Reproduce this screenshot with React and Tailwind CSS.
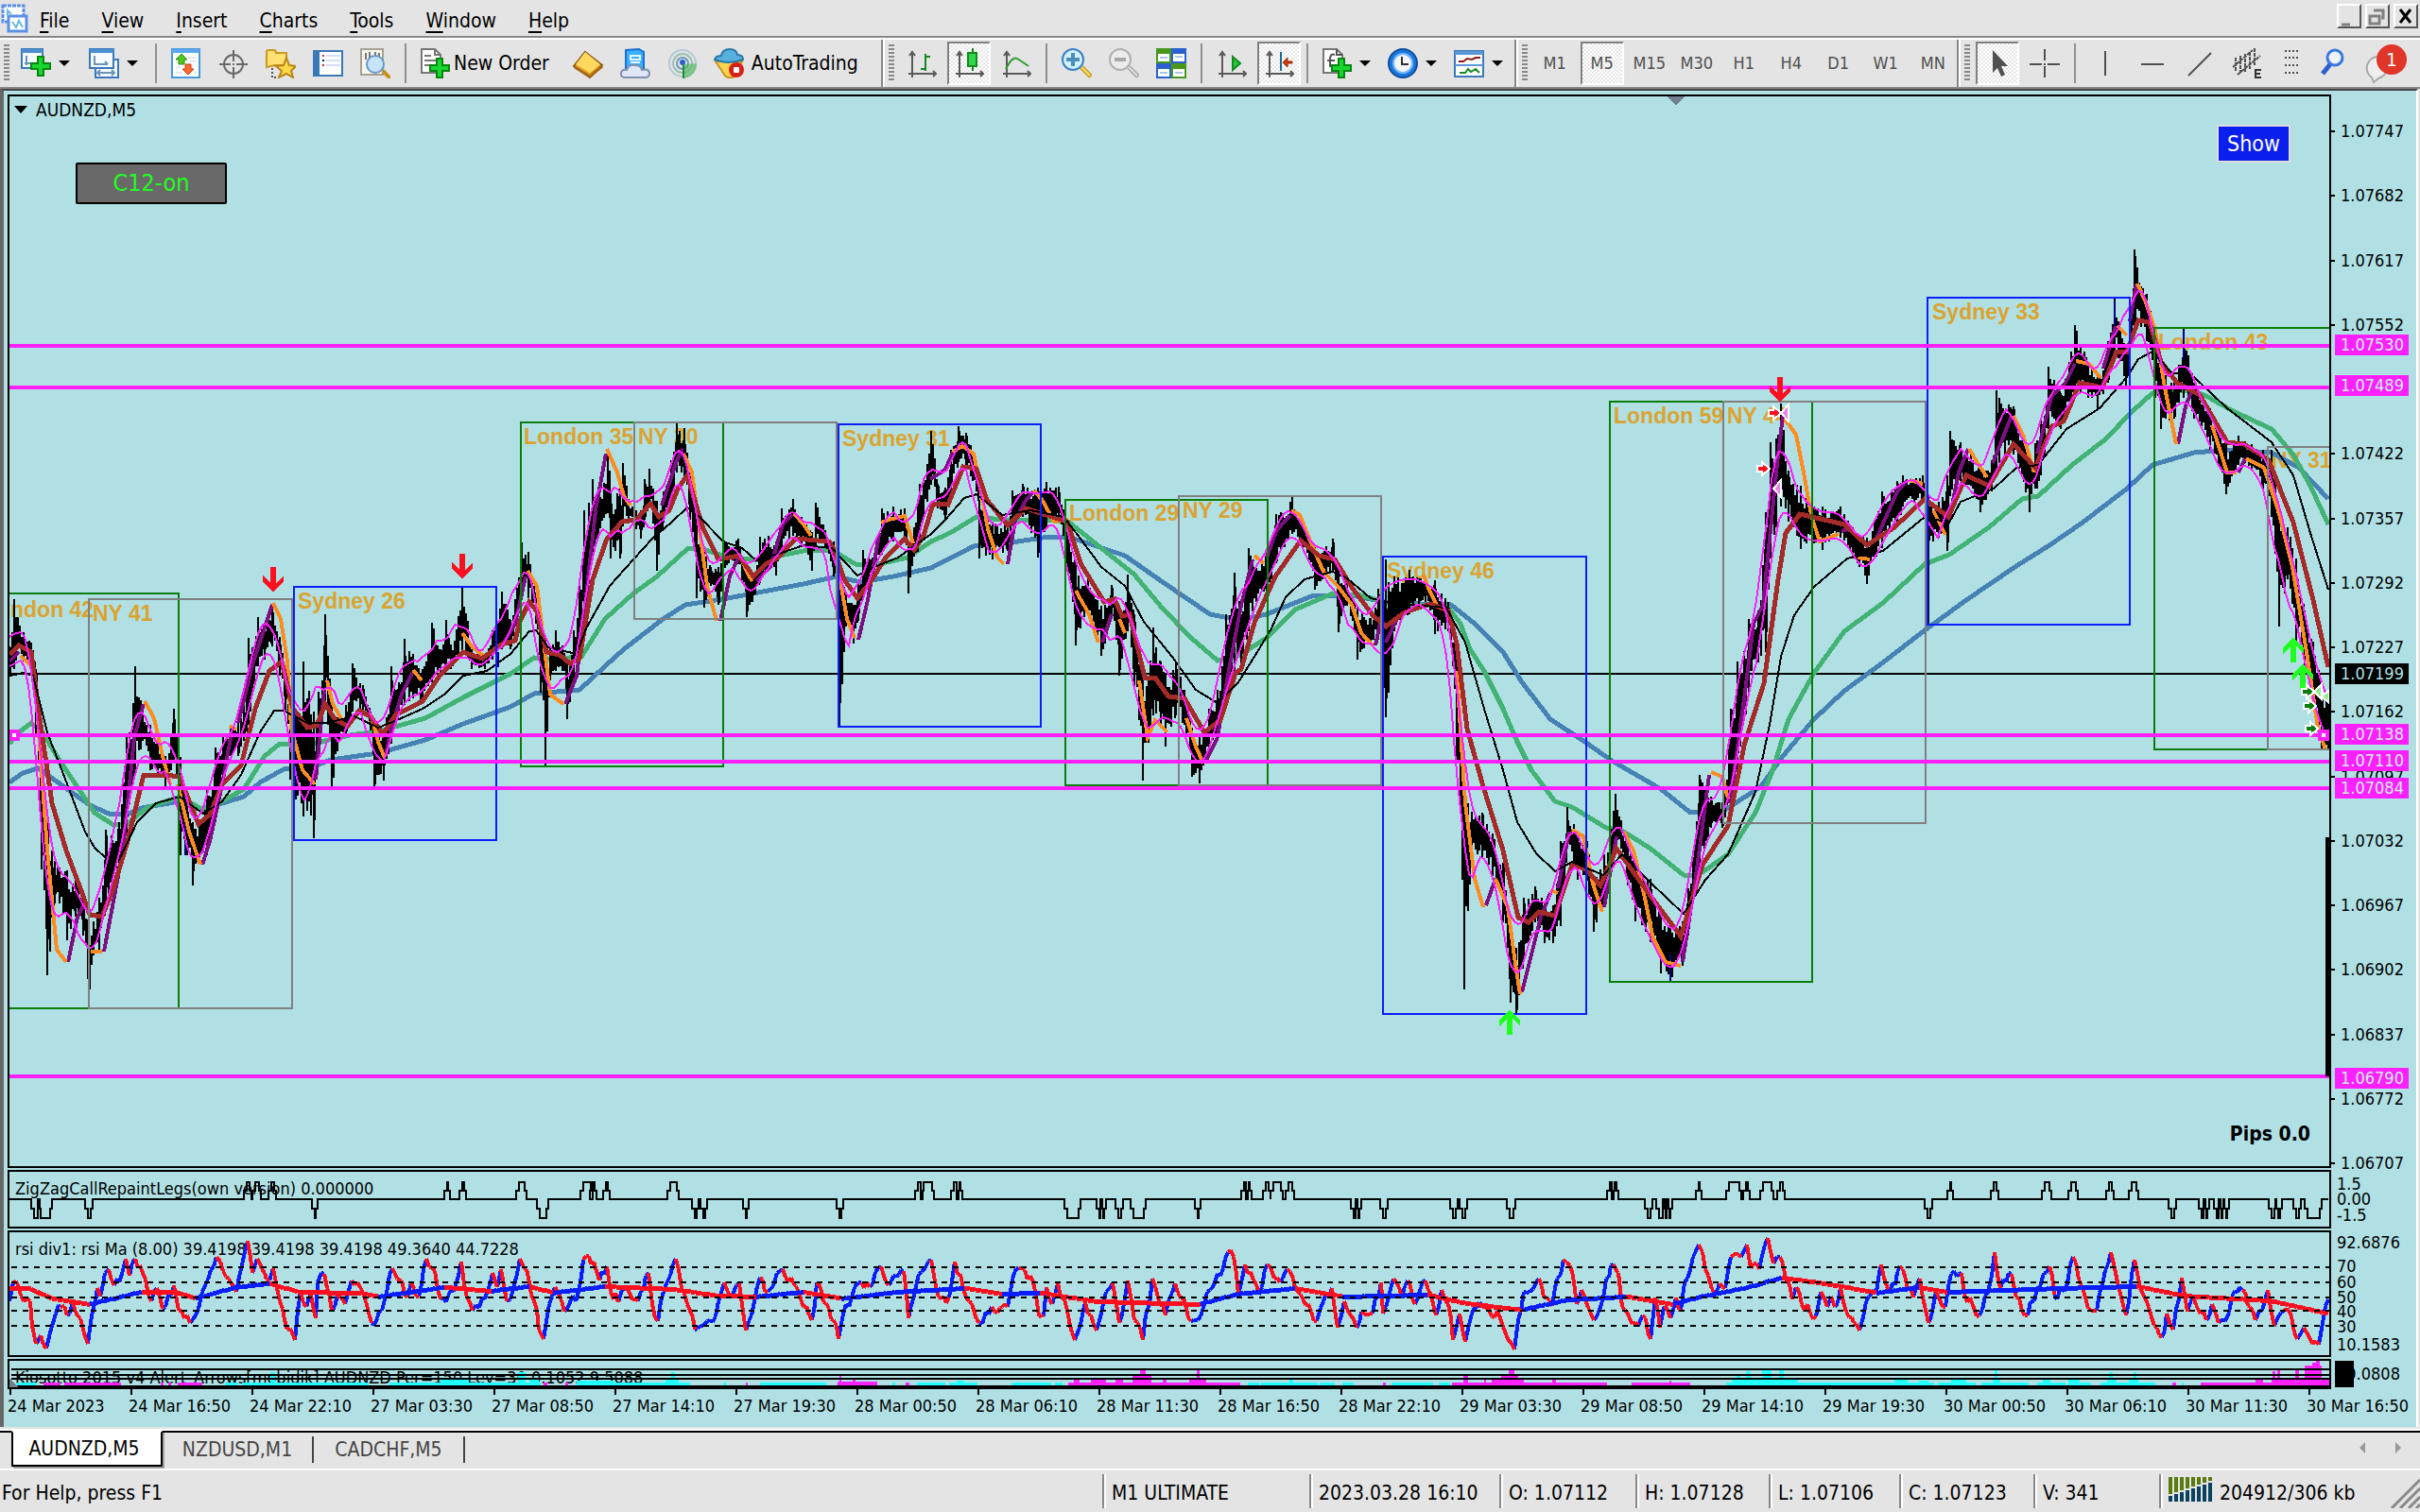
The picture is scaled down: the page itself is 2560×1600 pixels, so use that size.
import clsx from 'clsx';

// plot area shared by every pane, in chart units
const LEFT = 10;
const WIDTH = 2454;
const TOP = 102;
const HEIGHT = 1132;

// [x, high, low]
const PRICE = [
  [10, 684, 715], [15, 634, 708], [25, 670, 700], [33, 680, 702], [38, 708, 780], [44, 800, 920], [50, 870, 1032],
  [58, 911, 956], [63, 918, 956], [71, 921, 995], [80, 928, 970], [88, 949, 990], [94, 973, 1064], [99, 975, 1007],
  [105, 950, 1005], [112, 878, 960], [118, 884, 940], [126, 870, 920], [134, 780, 885], [143, 705, 820], [151, 752, 784],
  [159, 767, 815], [167, 785, 822], [175, 800, 835], [184, 750, 808], [191, 801, 905], [198, 853, 905], [204, 870, 937],
  [211, 870, 911], [219, 835, 905], [228, 791, 870], [236, 780, 818], [244, 767, 800], [252, 763, 800], [258, 746, 784],
  [263, 675, 767], [273, 653, 705], [280, 663, 698], [288, 639, 684], [296, 674, 715], [302, 708, 753], [307, 753, 825],
  [313, 753, 846], [321, 700, 864], [332, 753, 887], [337, 732, 787], [344, 650, 746], [351, 739, 836], [359, 756, 784],
  [366, 746, 780], [373, 702, 753], [384, 725, 753], [392, 753, 773], [396, 767, 836], [406, 773, 826], [414, 705, 787],
  [422, 722, 753], [428, 676, 746], [447, 708, 742], [457, 659, 722], [466, 687, 711], [472, 656, 708], [477, 684, 708],
  [489, 622, 694], [499, 687, 708], [513, 694, 708], [521, 667, 698], [531, 626, 687], [540, 656, 687], [552, 574, 633],
  [556, 587, 617], [559, 584, 633], [567, 627, 660], [572, 650, 733], [577, 700, 810], [582, 683, 720], [588, 667, 710],
  [595, 683, 710], [600, 700, 761], [607, 667, 720], [613, 617, 693], [618, 540, 653], [627, 507, 587], [633, 523, 570],
  [643, 483, 543], [646, 520, 591], [656, 517, 591], [659, 490, 557], [665, 530, 550], [673, 540, 560], [678, 540, 570],
  [682, 507, 550], [687, 496, 533], [695, 530, 604], [702, 520, 553], [710, 487, 533], [716, 448, 500], [724, 453, 510],
  [730, 500, 550], [737, 543, 633], [745, 580, 643], [752, 600, 620], [760, 600, 640], [767, 573, 600], [781, 570, 597],
  [790, 603, 653], [796, 607, 637], [804, 568, 617], [813, 567, 600], [821, 573, 609], [827, 538, 580], [839, 528, 567],
  [848, 547, 577], [859, 563, 604], [863, 532, 573], [873, 563, 580], [882, 573, 610], [888, 600, 768], [895, 627, 660],
  [903, 640, 681], [908, 617, 657], [913, 582, 633], [923, 590, 607], [933, 538, 587], [945, 536, 573], [957, 538, 567],
  [961, 580, 628], [973, 512, 573], [985, 456, 513], [992, 512, 538], [1000, 516, 550], [1006, 476, 520], [1014, 451, 489],
  [1022, 458, 498], [1033, 489, 520], [1036, 529, 591], [1050, 552, 592], [1066, 556, 583], [1071, 519, 556],
  [1082, 512, 547], [1098, 516, 590], [1107, 510, 560], [1120, 515, 552], [1129, 552, 601], [1138, 596, 683],
  [1151, 610, 650], [1165, 641, 694], [1176, 619, 654], [1184, 641, 715], [1193, 608, 668], [1200, 650, 730],
  [1209, 712, 826], [1220, 664, 757], [1228, 700, 766], [1233, 712, 790], [1244, 700, 757], [1255, 739, 779],
  [1261, 770, 822], [1269, 779, 829], [1279, 750, 793], [1288, 730, 779], [1297, 650, 739], [1306, 606, 712],
  [1313, 650, 704], [1321, 580, 668], [1329, 601, 637], [1340, 580, 628], [1350, 544, 596], [1367, 526, 565],
  [1379, 556, 579], [1391, 579, 624], [1410, 570, 605], [1416, 601, 669], [1425, 614, 641], [1436, 641, 698],
  [1450, 654, 681], [1458, 623, 677], [1466, 592, 759], [1475, 610, 668], [1491, 603, 650], [1508, 614, 637],
  [1518, 614, 671], [1532, 637, 668], [1541, 686, 804], [1549, 802, 1047], [1557, 864, 904], [1568, 860, 909],
  [1579, 882, 927], [1590, 913, 976], [1598, 976, 1061], [1604, 1003, 1074], [1612, 950, 1016], [1624, 938, 976],
  [1634, 954, 998], [1643, 958, 998], [1651, 890, 980], [1658, 854, 898], [1669, 882, 931], [1678, 887, 942],
  [1686, 926, 986], [1697, 904, 959], [1709, 840, 893], [1722, 893, 937], [1730, 909, 975], [1746, 930, 997],
  [1757, 964, 1030], [1767, 980, 1038], [1780, 975, 1022], [1786, 940, 990], [1798, 820, 926], [1810, 843, 876],
  [1822, 849, 876], [1831, 750, 854], [1838, 700, 821], [1850, 655, 734], [1860, 646, 701], [1868, 542, 690],
  [1873, 468, 591], [1884, 427, 536], [1892, 498, 552], [1905, 514, 581], [1919, 536, 575], [1928, 536, 582],
  [1947, 536, 569], [1960, 558, 591], [1975, 569, 618], [1991, 520, 580], [2007, 509, 558], [2013, 503, 536],
  [2034, 503, 531], [2040, 525, 580], [2051, 531, 569], [2060, 503, 583], [2063, 456, 525], [2074, 468, 509],
  [2095, 492, 542], [2107, 487, 520], [2112, 413, 498], [2130, 430, 481], [2147, 481, 542], [2159, 443, 503],
  [2167, 388, 454], [2180, 416, 454], [2195, 344, 421], [2209, 383, 421], [2219, 399, 432], [2230, 361, 405],
  [2237, 316, 372], [2249, 366, 410], [2258, 264, 344], [2271, 311, 361], [2280, 350, 421], [2286, 388, 454],
  [2300, 405, 443], [2310, 348, 421], [2321, 405, 443], [2338, 432, 476], [2355, 470, 523], [2368, 461, 492],
  [2382, 470, 498], [2394, 476, 519], [2403, 476, 547], [2411, 536, 663], [2420, 558, 613], [2429, 591, 679],
  [2438, 646, 706], [2447, 679, 745], [2456, 720, 794], [2463, 740, 794],
];

const SLOW_MA =
  '10,828 24,818 40,813 60,827 85,845 95,852 115,861 134,862 150,855 190,848 210,856 235,850 258,843 275,828 300,814 330,812 350,804 400,797 450,783 490,766 540,748 565,734 613,730 640,705 660,687 700,656 725,640 770,633 850,618 885,610 910,616 945,610 985,601 1030,578 1070,574 1110,568 1130,568 1190,588 1230,616 1280,650 1310,656 1340,650 1390,630 1430,630 1470,638 1535,640 1560,660 1590,690 1610,722 1640,761 1678,786 1705,805 1757,835 1787,859 1822,859 1863,832 1886,800 1919,761 1951,731 1992,701 2036,667 2080,635 2133,599 2168,577 2203,553 2250,517 2277,492 2321,479 2356,476 2403,479 2432,495 2463,528';
const MID_MA =
  '10,787 20,775 33,765 45,775 60,800 80,830 100,860 120,873 134,872 155,855 190,843 215,857 235,848 258,835 280,800 296,787 330,787 370,778 400,774 450,760 490,738 540,713 565,696 578,698 615,695 640,655 670,628 695,610 728,580 740,580 765,588 800,593 850,583 880,582 905,597 925,598 960,590 985,573 1005,564 1033,547 1060,550 1100,550 1130,552 1165,580 1200,608 1230,644 1260,675 1288,699 1310,694 1340,675 1370,645 1410,628 1440,630 1475,640 1530,640 1545,660 1555,687 1570,710 1590,750 1605,785 1620,815 1645,848 1663,854 1699,876 1716,879 1746,898 1781,926 1795,927 1828,904 1857,860 1875,816 1892,761 1919,712 1951,668 1992,638 2036,597 2062,587 2104,558 2139,528 2156,525 2192,492 2227,465 2256,435 2277,416 2315,413 2332,418 2362,435 2403,454 2426,481 2444,514 2463,555';
const THIN_MA =
  '10,715 25,712 35,715 50,775 75,840 90,880 100,897 112,908 125,912 145,870 165,850 190,843 215,861 235,848 255,820 275,775 290,752 300,752 325,765 345,765 375,758 400,770 420,762 447,750 470,735 490,715 515,710 540,692 560,668 567,667 580,685 610,692 620,665 645,620 670,592 690,570 710,553 727,537 740,547 765,573 785,580 800,593 830,584 850,577 880,580 907,609 925,600 950,590 985,565 1000,550 1020,527 1033,523 1060,545 1090,540 1125,547 1140,566 1165,600 1190,620 1210,658 1240,695 1265,730 1288,744 1310,722 1330,690 1345,665 1360,632 1380,613 1410,605 1425,612 1450,633 1470,638 1530,643 1550,680 1570,750 1590,815 1605,870 1625,903 1645,922 1663,912 1696,926 1716,904 1746,934 1781,967 1804,931 1828,904 1857,838 1872,767 1884,695 1898,651 1919,621 1954,591 1992,583 2036,547 2062,553 2074,531 2109,517 2133,495 2156,492 2186,454 2221,432 2250,399 2262,380 2277,372 2297,394 2321,399 2356,432 2403,468 2426,503 2444,564 2463,624';
const FAST_MA =
  '10,693 20,683 33,690 42,760 55,850 70,900 85,940 95,968 108,970 120,940 135,890 152,820 175,820 190,822 210,872 222,862 235,830 255,810 270,750 285,710 298,700 310,750 325,770 335,768 344,745 355,762 368,768 380,752 392,758 405,777 418,757 447,742 465,715 490,690 510,697 530,682 545,678 550,657 560,637 568,647 578,690 592,693 603,702 613,697 627,613 642,570 658,552 673,550 688,533 697,547 708,540 717,517 727,503 733,523 743,557 760,592 782,588 797,610 810,597 823,590 842,570 877,573 883,583 893,613 907,633 920,617 937,590 957,570 967,582 977,567 987,533 1003,534 1019,494 1033,496 1044,529 1066,556 1085,538 1107,545 1129,552 1143,596 1168,637 1179,634 1187,652 1195,650 1211,717 1222,717 1236,737 1253,739 1274,775 1291,762 1307,712 1313,708 1327,659 1349,610 1376,572 1395,588 1412,592 1431,623 1453,652 1466,663 1486,648 1513,639 1532,646 1541,681 1552,771 1568,829 1590,900 1606,971 1617,976 1628,965 1645,969 1663,915 1678,920 1693,937 1710,898 1746,948 1778,991 1801,915 1828,874 1845,789 1866,723 1881,613 1889,564 1904,544 1951,555 1975,577 2004,558 2036,528 2061,547 2080,503 2104,514 2130,470 2153,495 2171,451 2183,446 2200,405 2224,410 2239,372 2250,372 2262,339 2274,341 2286,383 2303,405 2327,418 2356,468 2374,470 2400,487 2426,553 2447,635 2463,706';

const HULL_DOWN = [
  '22,694 33,705', '40,760 50,900 60,1005 70,1018', '96,1007 108,1007', '153,742 163,760 172,800 180,830',
  '188,830 200,880 212,915', '243,768 250,772', '289,638 297,655 304,700 308,770 320,815 333,830', '346,720 352,745 362,762',
  '392,755 400,785 407,802', '437,709 446,720', '489,670 500,685 513,695', '558,604 568,620 574,670 582,735 596,745',
  '642,475 653,500 660,525 667,535', '723,480 732,500 740,560 748,620 758,657', '784,590 790,605 796,615', '840,543 850,555 858,567',
  '888,610 896,655 904,675', '932,553 940,550 957,546 966,575', '1008,478 1018,472 1030,480 1036,510 1045,560 1055,590 1062,597',
  '1094,519 1103,530 1115,552 1130,550', '1138,625 1152,650 1162,680', '1184,655 1190,670', '1205,720 1214,780 1222,762 1235,775',
  '1255,760 1265,790 1273,808', '1327,588 1337,596', '1366,540 1375,545 1385,570 1400,605 1415,620 1430,640 1440,670 1452,683',
  '1506,608 1512,625 1520,640', '1541,710 1550,850 1560,930 1569,960', '1582,930 1595,960 1603,1020 1608,1052', '1640,942 1648,945',
  '1663,878 1675,885 1685,935 1695,965', '1718,880 1728,900 1740,950 1748,990 1762,1018 1778,1022', '1810,817 1822,822 1828,845',
  '1888,443 1900,460 1908,500 1916,545 1925,573 1945,565', '1965,590 1978,592', '2020,508 2034,512', '2045,540 2058,566',
  '2083,475 2092,490 2102,505', '2130,440 2140,460 2152,500', '2196,382 2210,385 2222,400', '2240,345 2250,355',
  '2261,300 2270,320 2280,350 2290,410 2302,470', '2340,450 2356,500 2366,500', '2376,485 2395,495 2410,540 2425,600 2440,690 2452,770 2460,793',
];
const HULL_UP = [
  '10,700 20,690', '72,1018 82,970 90,955', '110,1007 130,900 142,780 152,745', '214,915 222,890 235,830 245,775',
  '252,765 268,700 288,640', '334,825 343,730', '408,800 414,770 425,735 436,712', '530,685 545,660 556,610',
  '598,745 610,715 618,650 630,540 641,480', '700,535 715,490 722,475', '762,657 772,610 781,590', '800,615 815,600 828,555 838,545',
  '908,677 918,635 930,565', '984,507 1000,497 1008,478', '1066,597 1074,550 1085,530 1093,520', '1166,680 1176,650',
  '1276,805 1288,780 1298,720 1313,640 1325,592', '1340,590 1350,562 1365,545', '1455,683 1462,650', '1466,680 1480,650',
  '1572,958 1582,930', '1610,1050 1620,1010 1630,970 1640,945', '1648,940 1660,880', '1697,960 1710,885', '1780,1018 1795,920 1808,820',
  '1830,850 1845,740 1855,660 1865,640 1880,490 1886,440', '1948,562 1955,560', '1985,570 2007,520 2018,508', '2062,550 2072,500 2082,475',
  '2108,490 2120,460 2128,440', '2155,480 2170,420 2185,405 2195,385', '2225,390 2238,345', '2253,340 2260,300', '2304,470 2312,430 2320,410',
  '2368,500 2375,485',
];

// [x, y, right, bottom]
const SESSIONS = [
  { label: 'ndon 42', box: [0, 628, 189, 1067], at: [11, 645], color: '#0a7d0a' },
  { label: 'NY 41', box: [94, 634, 309, 1067], at: [98, 649], color: '#808080' },
  { label: 'Sydney 26', box: [311, 621, 525, 889], at: [315, 636], color: '#0a1eff' },
  { label: 'London 35', box: [551, 447, 765, 811], at: [554, 462], color: '#0a7d0a' },
  { label: 'NY 30', box: [671, 447, 885, 655], at: [675, 462], color: '#808080' },
  { label: 'Sydney 31', box: [887, 449, 1101, 769], at: [891, 464], color: '#0a1eff' },
  { label: 'London 29', box: [1127, 529, 1341, 831], at: [1131, 543], color: '#0a7d0a' },
  { label: 'NY 29', box: [1247, 525, 1461, 831], at: [1251, 540], color: '#808080' },
  { label: 'Sydney 46', box: [1463, 589, 1678, 1073], at: [1467, 604], color: '#0a1eff' },
  { label: 'London 59', box: [1703, 425, 1917, 1039], at: [1707, 440], color: '#0a7d0a' },
  { label: 'NY 44', box: [1823, 425, 2037, 871], at: [1827, 440], color: '#808080' },
  { label: 'Sydney 33', box: [2039, 315, 2253, 661], at: [2044, 330], color: '#0a1eff' },
  { label: 'London 43', box: [2279, 347, 2480, 793], at: [2283, 362], color: '#0a7d0a' },
  { label: 'NY 31', box: [2399, 473, 2480, 793], at: [2403, 487], color: '#808080' },
];

const LEVELS = [366, 410, 778, 806, 834, 1139];

const AXIS = [
  ['1.07747', 141], ['1.07682', 209], ['1.07617', 277], ['1.07552', 345], ['1.07422', 481], ['1.07357', 549], ['1.07292', 617],
  ['1.07227', 685], ['1.07162', 753], ['1.07097', 821], ['1.07032', 889], ['1.06967', 957], ['1.06902', 1025], ['1.06837', 1093],
  ['1.06772', 1161], ['1.06707', 1229],
];
const TAGS = [
  ['1.07530', 366], ['1.07489', 409], ['1.07138', 777], ['1.07110', 805], ['1.07084', 833], ['1.06790', 1139],
];

const RSI = [
  [10, 1377], [14, 1357], [25, 1377], [32, 1377], [34, 1403], [38, 1422], [43, 1413], [49, 1427], [53, 1410], [59, 1390], [64, 1383],
  [71, 1392], [77, 1377], [82, 1392], [88, 1407], [93, 1422], [98, 1387], [103, 1363], [106, 1372], [111, 1347], [115, 1343],
  [121, 1360], [129, 1348], [133, 1332], [137, 1350], [143, 1332], [151, 1347], [160, 1377], [166, 1363], [172, 1385], [184, 1360],
  [189, 1387], [201, 1400], [207, 1392], [217, 1360], [229, 1330], [236, 1345], [250, 1367], [255, 1343], [262, 1313], [267, 1347],
  [272, 1332], [277, 1343], [285, 1355], [289, 1342], [296, 1377], [304, 1407], [312, 1418], [318, 1367], [324, 1383], [329, 1370],
  [334, 1395], [336, 1357], [343, 1348], [351, 1387], [357, 1370], [365, 1380], [372, 1355], [378, 1357], [387, 1377], [393, 1400],
  [404, 1387], [415, 1342], [420, 1353], [425, 1355], [431, 1373], [435, 1357], [443, 1372], [451, 1332], [460, 1345], [466, 1375],
  [480, 1367], [488, 1335], [494, 1373], [500, 1387], [513, 1375], [521, 1347], [526, 1362], [530, 1343], [536, 1377], [543, 1363],
  [550, 1332], [557, 1343], [565, 1377], [570, 1407], [575, 1417], [581, 1380], [587, 1362], [597, 1388], [612, 1367], [617, 1333],
  [628, 1335], [634, 1355], [642, 1340], [646, 1367], [654, 1378], [661, 1363], [675, 1377], [686, 1347], [690, 1380], [696, 1398],
  [702, 1367], [715, 1332], [721, 1363], [730, 1387], [735, 1407], [757, 1393], [766, 1357], [775, 1370], [782, 1358], [789, 1408],
  [798, 1377], [804, 1352], [812, 1367], [828, 1343], [845, 1367], [850, 1383], [859, 1397], [864, 1357], [871, 1378], [882, 1397],
  [887, 1417], [892, 1390], [901, 1373], [911, 1357], [920, 1362], [932, 1340], [940, 1360], [945, 1350], [956, 1345], [961, 1395],
  [972, 1348], [985, 1333], [993, 1373], [1004, 1373], [1010, 1335], [1025, 1377], [1036, 1400], [1049, 1383], [1066, 1383],
  [1071, 1353], [1078, 1343], [1093, 1357], [1099, 1393], [1104, 1393], [1107, 1362], [1113, 1380], [1119, 1358], [1129, 1387],
  [1137, 1418], [1148, 1378], [1160, 1408], [1167, 1380], [1177, 1358], [1184, 1400], [1193, 1355], [1200, 1397], [1209, 1418],
  [1219, 1353], [1233, 1392], [1243, 1358], [1252, 1373], [1260, 1398], [1270, 1393], [1277, 1367], [1291, 1350], [1299, 1325],
  [1305, 1330], [1310, 1370], [1317, 1338], [1332, 1370], [1341, 1338], [1354, 1357], [1362, 1343], [1373, 1367], [1384, 1380],
  [1393, 1398], [1400, 1377], [1409, 1363], [1415, 1405], [1422, 1377], [1435, 1405], [1440, 1388], [1452, 1390], [1461, 1357],
  [1463, 1390], [1474, 1353], [1483, 1373], [1489, 1355], [1497, 1380], [1508, 1355], [1519, 1392], [1525, 1365], [1532, 1380],
  [1537, 1418], [1544, 1390], [1550, 1420], [1557, 1390], [1568, 1382], [1587, 1395], [1595, 1417], [1602, 1428], [1606, 1397],
  [1612, 1367], [1628, 1353], [1633, 1373], [1642, 1382], [1647, 1353], [1654, 1333], [1664, 1350], [1668, 1380], [1673, 1365],
  [1686, 1397], [1694, 1380], [1699, 1353], [1707, 1338], [1712, 1347], [1716, 1383], [1733, 1403], [1738, 1392], [1746, 1417],
  [1751, 1373], [1756, 1405], [1761, 1382], [1767, 1395], [1773, 1373], [1778, 1387], [1782, 1357], [1791, 1330], [1797, 1317],
  [1804, 1343], [1814, 1370], [1819, 1358], [1825, 1363], [1831, 1330], [1842, 1330], [1848, 1317], [1852, 1342], [1861, 1343],
  [1870, 1310], [1876, 1337], [1883, 1330], [1889, 1353], [1896, 1375], [1900, 1362], [1906, 1380], [1921, 1393], [1926, 1367],
  [1933, 1383], [1937, 1372], [1941, 1383], [1947, 1363], [1953, 1388], [1967, 1408], [1974, 1377], [1985, 1367], [1990, 1338],
  [1999, 1368], [2010, 1340], [2024, 1373], [2031, 1353], [2040, 1400], [2048, 1367], [2058, 1383], [2064, 1348], [2075, 1347],
  [2078, 1370], [2094, 1392], [2103, 1367], [2110, 1325], [2116, 1363], [2128, 1348], [2133, 1373], [2145, 1392], [2155, 1363],
  [2168, 1340], [2173, 1370], [2184, 1367], [2193, 1330], [2202, 1360], [2209, 1385], [2218, 1387], [2224, 1360], [2233, 1325],
  [2240, 1357], [2249, 1392], [2258, 1333], [2264, 1363], [2270, 1375], [2279, 1403], [2287, 1415], [2292, 1390], [2299, 1407],
  [2308, 1352], [2314, 1388], [2320, 1372], [2334, 1397], [2340, 1380], [2347, 1400], [2354, 1398], [2361, 1372], [2372, 1365],
  [2386, 1397], [2393, 1387], [2399, 1365], [2406, 1403], [2416, 1387], [2424, 1393], [2430, 1417], [2437, 1405], [2443, 1415],
  [2453, 1423], [2457, 1400], [2463, 1375],
];

const RSI_MA = [
  [10, 1363], [30, 1363], [55, 1374], [95, 1380], [150, 1367], [185, 1367], [207, 1374], [250, 1362], [285, 1358], [315, 1367],
  [380, 1368], [400, 1372], [470, 1362], [520, 1366], [560, 1361], [585, 1368], [640, 1361], [710, 1364], [760, 1371], [800, 1372],
  [850, 1367], [890, 1374], [950, 1367], [1020, 1363], [1060, 1369], [1100, 1368], [1160, 1377], [1270, 1380], [1310, 1369],
  [1370, 1363], [1420, 1372], [1510, 1370], [1550, 1379], [1610, 1386], [1660, 1375], [1720, 1372], [1770, 1380], [1800, 1372],
  [1850, 1362], [1885, 1352], [1930, 1358], [1985, 1368], [2030, 1362], [2060, 1367], [2150, 1364], [2180, 1363], [2260, 1361],
  [2310, 1371], [2400, 1376], [2463, 1390],
];

// [start, end, direction] of every zigzag leg
const LEGS = [
  [36, 39, -1], [43, 52, -1], [93, 95, -1], [261, 263, 1], [270, 273, 1], [287, 289, 1], [333, 333, -1], [473, 473, 1], [489, 490, 1],
  [549, 554, 1], [571, 577, -1], [617, 624, 1], [627, 628, 1], [641, 642, 1], [709, 715, 1], [735, 736, -1], [744, 745, -1],
  [789, 789, -1], [888, 889, -1], [971, 973, 1], [977, 985, 1], [1009, 1011, 1], [1015, 1015, 1], [1129, 1140, -1], [1163, 1163, -1],
  [1167, 1167, -1], [1183, 1185, -1], [1199, 1209, -1], [1267, 1267, -1], [1316, 1317, 1], [1321, 1321, 1], [1339, 1341, 1],
  [1347, 1354, 1], [1363, 1366, 1], [1432, 1433, -1], [1437, 1437, -1], [1463, 1465, -1], [1537, 1539, -1], [1547, 1549, -1],
  [1597, 1600, -1], [1703, 1704, 1], [1708, 1709, 1], [1743, 1745, -1], [1755, 1758, -1], [1762, 1762, -1], [1766, 1766, -1],
  [1797, 1797, 1], [1829, 1839, 1], [1847, 1848, 1], [1865, 1873, 1], [1883, 1885, 1], [2039, 2041, -1], [2063, 2063, 1],
  [2109, 2111, 1], [2163, 2167, 1], [2191, 2195, 1], [2231, 2233, 1], [2255, 2259, 1], [2297, 2299, -1], [2329, 2330, -1],
  [2334, 2334, -1], [2345, 2346, -1], [2350, 2350, -1], [2355, 2355, -1], [2403, 2405, -1], [2410, 2411, -1], [2429, 2431, -1],
  [2441, 2453, -1],
];

// [x, width, height, color]
const C = '#20ffff';
const M = '#ff20ff';
const HISTOGRAM = [
  [18, 20, 3, C], [46, 18, 3, M], [68, 60, 3, M], [170, 3, 3, M], [178, 3, 3, M], [188, 26, 3, M], [238, 14, 3, C], [256, 134, 3, C],
  [286, 5, 14, C], [412, 160, 3, C], [466, 30, 6, C], [548, 8, 14, C], [560, 10, 6, C], [575, 4, 3, M], [598, 3, 3, M], [610, 40, 5, C],
  [640, 90, 3, C], [704, 14, 8, C], [710, 4, 14, C], [765, 3, 3, C], [789, 2, 3, M], [804, 70, 3, C], [886, 42, 4, M], [888, 2, 12, M],
  [902, 3, 6, M], [944, 3, 3, C], [958, 4, 3, M], [970, 30, 3, C], [1004, 30, 3, C], [1012, 8, 5, C], [1070, 42, 3, C], [1116, 8, 3, C],
  [1130, 182, 3, M], [1136, 6, 6, M], [1154, 16, 6, M], [1180, 8, 8, M], [1198, 20, 10, M], [1206, 6, 16, M], [1230, 4, 6, M],
  [1258, 18, 7, M], [1266, 3, 18, M], [1320, 12, 3, C], [1334, 60, 3, C], [1364, 4, 6, C], [1396, 16, 3, C], [1420, 12, 3, C],
  [1463, 3, 3, M], [1472, 44, 3, C], [1522, 12, 3, C], [1536, 164, 3, M], [1548, 5, 10, M], [1570, 2, 6, M], [1578, 34, 6, M],
  [1588, 18, 10, M], [1596, 6, 18, M], [1642, 4, 6, M], [1726, 62, 3, M], [1766, 2, 5, M], [1826, 130, 3, C], [1832, 70, 6, C],
  [1837, 4, 12, C], [1847, 5, 15, C], [1864, 10, 18, C], [1882, 5, 18, C], [1956, 90, 3, C], [2004, 14, 6, C], [2030, 10, 5, C],
  [2050, 40, 3, C], [2064, 16, 6, C], [2096, 50, 3, C], [2108, 8, 8, C], [2110, 3, 16, C], [2155, 30, 3, C], [2161, 8, 8, C],
  [2188, 12, 8, C], [2200, 12, 3, C], [2222, 58, 3, C], [2229, 10, 8, C], [2231, 4, 14, C], [2252, 10, 8, C], [2257, 3, 14, C],
  [2298, 4, 3, M], [2308, 2, 3, C], [2328, 76, 3, M], [2386, 8, 6, M], [2403, 61, 8, M], [2404, 3, 15, M], [2409, 3, 18, M],
  [2428, 4, 18, M], [2438, 18, 21, M], [2446, 8, 24, M], [2450, 4, 26, M],
];

const DATES = [
  '24 Mar 2023', '24 Mar 16:50', '24 Mar 22:10', '27 Mar 03:30', '27 Mar 08:50', '27 Mar 14:10', '27 Mar 19:30', '28 Mar 00:50',
  '28 Mar 06:10', '28 Mar 11:30', '28 Mar 16:50', '28 Mar 22:10', '29 Mar 03:30', '29 Mar 08:50', '29 Mar 14:10', '29 Mar 19:30',
  '30 Mar 00:50', '30 Mar 06:10', '30 Mar 11:30', '30 Mar 16:50',
];

function random(seed) {
  let s = seed;
  return () => {
    s = (s * 16807) % 2147483647;
    return s / 2147483647;
  };
}

function bandAt(x) {
  let i = 1;
  while (i < PRICE.length - 1 && PRICE[i][0] < x) i++;
  const a = PRICE[i - 1];
  const b = PRICE[i];
  const t = Math.min(1, Math.max(0, (x - a[0]) / (b[0] - a[0])));
  return [a[1] + (b[1] - a[1]) * t, a[2] + (b[2] - a[2]) * t];
}

function smoothBand(x) {
  let hi = 0;
  let lo = 0;
  for (let d = -10; d <= 10; d += 5) {
    const [h, l] = bandAt(x + d);
    hi += h / 5;
    lo += l / 5;
  }
  return [hi, lo];
}

function candles() {
  const next = random(77);
  let d = '';
  for (let x = LEFT; x < LEFT + WIDTH; x += 2) {
    const [hi, lo] = bandAt(x);
    const range = lo - hi;
    const top = hi + range * (0.04 + next() * 0.3);
    const bottom = lo - range * (0.04 + next() * 0.3);
    d += `M${x + 1} ${Math.round(top)}V${Math.round(bottom)}`;
  }
  PRICE.forEach(([x, hi, lo]) => {
    d += `M${x} ${hi}V${lo}`;
  });
  return d;
}

function channel(side) {
  const pts = [];
  for (let x = LEFT; x < LEFT + WIDTH; x += 4) {
    const [hi, lo] = smoothBand(x);
    const inset = (lo - hi) * 0.14;
    pts.push(`${x},${Math.round(side === 0 ? hi + inset : lo - inset)}`);
  }
  return pts.join(' ');
}

function zigzag() {
  let d = 'M10 1269';
  LEGS.forEach(([a, b, dir]) => {
    const y = dir > 0 ? 1251 : 1289;
    d += `H${a - 3}V${dir > 0 ? 1260 : 1279}H${a}V${y}H${b + 1}V${dir > 0 ? 1260 : 1279}H${b + 3}V1269`;
  });
  return d + 'H2463';
}

// splits a series into its rising and its falling strokes
function slopes(series, noise) {
  const next = random(31);
  let up = '';
  let down = '';
  for (let i = 1; i < series.length; i++) {
    const [x0, y0] = series[i - 1];
    const [x1, y1] = series[i];
    const steps = Math.max(1, Math.round((x1 - x0) / 3));
    let px = x0;
    let py = y0;
    for (let k = 1; k <= steps; k++) {
      const x = x0 + ((x1 - x0) * k) / steps;
      const y = y0 + ((y1 - y0) * k) / steps + (k < steps ? (next() - 0.5) * noise : 0);
      const stroke = `M${Math.round(px)} ${Math.round(py)}L${Math.round(x)} ${Math.round(y)}`;
      if (y1 < y0) up += stroke;
      else down += stroke;
      px = x;
      py = y;
    }
  }
  return { up, down };
}

const CANDLES = candles();
const UPPER = channel(0);
const LOWER = channel(1);
const ZIGZAG = zigzag();
const RSI_LINES = slopes(RSI, 12);
const RSI_MA_LINES = slopes(RSI_MA, 0);

const fromLeft = (x) => `${((x - LEFT) / WIDTH) * 100}%`;
const fromTop = (y) => `${((y - TOP) / HEIGHT) * 100}%`;

function Plot({ top, height, children }) {
  return (
    <svg
      className="absolute inset-0 h-full w-full"
      viewBox={`${LEFT} ${top} ${WIDTH} ${height}`}
      preserveAspectRatio="none"
      shapeRendering="crispEdges"
      fill="none"
      aria-hidden="true"
    >
      {children}
    </svg>
  );
}

function ArrowMark({ x, y, up }) {
  return up ? (
    <path d={`M${x} ${y}L${x + 11} ${y + 12}V${y + 18}L${x + 3} ${y + 10}V${y + 27}H${x - 3}V${y + 10}L${x - 11} ${y + 18}V${y + 12}Z`} fill="#20ff20" />
  ) : (
    <path d={`M${x} ${y + 27}L${x + 11} ${y + 15}V${y + 9}L${x + 3} ${y + 17}V${y}H${x - 3}V${y + 17}L${x - 11} ${y + 9}V${y + 15}Z`} fill="#ff1020" />
  );
}

function TradeMark({ x, y, color }) {
  return (
    <path d={`M${x - 6} ${y - 3}H${x - 1}V${y - 7}L${x + 7} ${y}L${x - 1} ${y + 7}V${y + 3}H${x - 6}Z`} fill={color} stroke="#fff" strokeWidth="2" />
  );
}

function PricePane() {
  return (
    <div className="flex min-h-0 flex-1">
      <div className="relative min-w-0 flex-1 border-2 border-black">
        <div className="absolute inset-0 overflow-hidden">
          {SESSIONS.map((s) => (
            <span
              key={s.label}
              className="absolute -translate-y-1/2 text-[23px] leading-7 font-bold whitespace-nowrap text-[#dba330] font-['Liberation_Sans',sans-serif]"
              style={{ left: fromLeft(s.at[0]), top: fromTop(s.at[1]) }}
            >
              {s.label}
            </span>
          ))}
        </div>
        <Plot top={TOP} height={HEIGHT}>
          <path d="M10 713H2464" stroke="#000" strokeWidth="2" />
          <polyline points={SLOW_MA} stroke="#4682b4" strokeWidth="5" />
          <polyline points={MID_MA} stroke="#42b375" strokeWidth="5" />
          <path d={CANDLES} stroke="#000" strokeWidth="2" />
          <path d="M888 600V768M2040 525V660" stroke="#000" strokeWidth="2" />
          <path d="M527 690V706M196 870V905M2310 350V380M1767 1010V1038M2237 318V350" stroke="#000080" strokeWidth="2" />
          {HULL_UP.map((p) => (
            <polyline key={p} points={p} stroke="#7d1080" strokeWidth="4" />
          ))}
          {HULL_DOWN.map((p) => (
            <polyline key={p} points={p} stroke="#ff8c20" strokeWidth="4" />
          ))}
          <polyline points={FAST_MA} stroke="#a52a2a" strokeWidth="5" />
          <polyline points={THIN_MA} stroke="#000" strokeWidth="2" />
          <polyline points={UPPER} stroke="#ff20ff" strokeWidth="2" />
          <polyline points={LOWER} stroke="#ff20ff" strokeWidth="2" />
          {SESSIONS.map(({ label, box, color }) => (
            <rect key={label} x={box[0]} y={box[1]} width={box[2] - box[0]} height={box[3] - box[1]} stroke={color} strokeWidth="2" />
          ))}
          {LEVELS.map((y) => (
            <path key={y} d={`M10 ${y}H2464`} stroke="#ff20ff" strokeWidth="4" />
          ))}
          <path d="M11 774H19V782H11ZM2454 774H2462V782H2454Z" fill="#fff" stroke="#ff20ff" strokeWidth="4" />
          <ArrowMark x={289} y={600} />
          <ArrowMark x={489} y={586} />
          <ArrowMark x={1883} y={399} />
          <ArrowMark x={1597} y={1068} up />
          <ArrowMark x={2426} y={674} up />
          <ArrowMark x={2436} y={702} up />
          <path d="M1892 428V446L1884 437ZM1884 508V526L1876 517Z" fill="#ee82ee" stroke="#fff" strokeWidth="2" />
          <path d="M2456 724V740L2448 732ZM2464 730V744L2456 737Z" fill="#90ee90" stroke="#fff" strokeWidth="2" />
          <TradeMark x={1877} y={437} color="#ff1020" />
          <TradeMark x={1865} y={496} color="#ff1020" />
          <TradeMark x={2441} y={732} color="#0a7d0a" />
          <TradeMark x={2443} y={747} color="#0a7d0a" />
          <TradeMark x={2445} y={771} color="#0a7d0a" />
          <path d="M1764 102H1782L1773 112Z" fill="#708090" />
          <path d="M2462 886V1139" stroke="#000" strokeWidth="4" />
        </Plot>
        <h1 className="absolute top-0.5 left-1 flex items-center gap-2 text-[19px] leading-6">
          <svg className="h-2 w-4" viewBox="0 0 16 8" aria-hidden="true">
            <path d="M1 0H15L8 8Z" />
          </svg>
          AUDNZD,M5
        </h1>
        <button className="absolute top-[70px] left-[70px] h-11 w-[160px] rounded-xs border-2 border-black bg-[#696969] text-[25px] leading-8 text-[#20ff20]">
          C12-on
        </button>
        <button className="absolute top-[30px] right-[41px] h-10 w-[78px] border-2 border-[#dcdcdc] bg-[#0a1eee] text-[23px] leading-8 text-white">
          Show
        </button>
        <p className="absolute right-5 bottom-5 text-[21px] leading-7 font-bold">Pips 0.0</p>
      </div>
      <div className="relative w-[90px]">
        {AXIS.map(([label, y]) => (
          <div key={label} className="absolute left-0 flex -translate-y-1/2 items-center gap-1.5 text-lg leading-5" style={{ top: fromTop(y) }}>
            <i className="h-0.5 w-1 bg-black" />
            {label}
          </div>
        ))}
        {TAGS.map(([label, y]) => (
          <div key={label} className="absolute left-1 w-[78px] -translate-y-1/2 bg-[#ff20ff] pl-1.5 text-lg leading-[22px] text-[#c8ecf0]" style={{ top: fromTop(y) }}>
            {label}
          </div>
        ))}
        <div className="absolute left-1 w-[78px] -translate-y-1/2 bg-black pl-1.5 text-lg leading-[22px] text-[#b0e0e4]" style={{ top: fromTop(713) }}>
          1.07199
        </div>
      </div>
    </div>
  );
}

function SubPane({ className, title, top, height, labels, axis, children }) {
  return (
    <section className={clsx('flex', className)}>
      <div className="relative min-w-0 flex-1 overflow-hidden border-2 border-black">
        <h2 className="absolute top-1.5 left-1.5 text-lg leading-6 whitespace-nowrap">{title}</h2>
        <Plot top={top} height={height}>
          {children}
        </Plot>
      </div>
      <div className="relative w-[90px]">
        {axis}
        {labels.map(([label, y]) => (
          <span key={label} className="absolute left-1.5 -translate-y-1/2 text-lg leading-5" style={{ top: `${((y - top) / height) * 100}%` }}>
            {label}
          </span>
        ))}
      </div>
    </section>
  );
}

function Chart() {
  return (
    <main className="mr-0.5 flex min-h-0 flex-1 flex-col border-t-2 border-r-2 border-l-4 border-t-[#444] border-r-white border-l-[#666] bg-[#b0e0e4] pl-1">
      <div className="flex min-h-0 flex-1 flex-col gap-0.5 pt-1">
        <PricePane />
        <SubPane
          className="h-[62px]"
          title="ZigZagCallRepaintLegs(own version) 0.000000"
          top={1240}
          height={58}
          labels={[['1.5', 1254], ['0.00', 1269], ['-1.5', 1285]]}
        >
          <path d={ZIGZAG} stroke="#000" strokeWidth="2" />
        </SubPane>
        <SubPane
          className="h-[134px]"
          title="rsi div1: rsi Ma (8.00) 39.4198 39.4198 39.4198 49.3640 44.7228"
          top={1304}
          height={130}
          labels={[['92.6876', 1317], ['70', 1341], ['60', 1357], ['50', 1373], ['40', 1387], ['30', 1403], ['10.1583', 1421]]}
        >
          <path d={RSI_LINES.up} stroke="#0a1eff" strokeWidth="4" />
          <path d={RSI_LINES.down} stroke="#ff1020" strokeWidth="4" />
          <path d={RSI_MA_LINES.down} stroke="#ff1020" strokeWidth="5" />
          <path d={RSI_MA_LINES.up} stroke="#0a1eff" strokeWidth="5" />
          <path d="M12 1341H2464M12 1357H2464M12 1373H2464M12 1387H2464M12 1403H2464" stroke="#000" strokeWidth="2" strokeDasharray="6 6" />
        </SubPane>
        <SubPane
          className="h-[32px]"
          title="Kiosotto 2015 v4 Alert_Arrows[mobidik] AUDNZD Per=150 Lev=30 0.1052 9.5088"
          top={1440}
          height={28}
          labels={[['10.0808', 1454]]}
          axis={<i className="absolute top-0.5 left-1 h-7 w-5 bg-black" />}
        >
          {HISTOGRAM.map(([x, w, h, color]) => (
            <rect key={`${x}-${w}`} x={x} y={1466 - h} width={w} height={h} fill={color} />
          ))}
          <path d="M12 1449H2464M12 1455H2464M12 1459H2464M10 1467H2464" stroke="#000" strokeWidth="2" />
          <path d="M10 1459L20 1468H10Z" fill="#708090" />
        </SubPane>
      </div>
      <ol className="flex h-10 pl-0.5">
        {DATES.map((date) => (
          <li key={date} className="w-32 shrink-0 text-lg leading-5 whitespace-nowrap">
            <i className="block h-1.5 w-0.5 bg-black" />
            <span className="-ml-0.5 block pt-0.5">{date}</span>
          </li>
        ))}
      </ol>
    </main>
  );
}

/* ---- toolbar icons, 32x32 ---- */

function Icon({ children }) {
  return (
    <svg className="h-8 w-8 shrink-0" viewBox="0 0 32 32" fill="none" aria-hidden="true">
      {children}
    </svg>
  );
}

const Plus = ({ x = 18, y = 18 }) => (
  <path d={`M${x - 3} ${y - 10}H${x + 3}V${y - 3}H${x + 10}V${y + 3}H${x + 3}V${y + 10}H${x - 3}V${y + 3}H${x - 10}V${y - 3}H${x - 3}Z`} fill="#18d830" stroke="#07850f" strokeWidth="2" />
);
const Axes = () => <path d="M6 5V31M2 27H31M3 8L6 4L9 8M28 24L31 27L28 30" stroke="#5a5a5a" strokeWidth="2" />;

const NewChartIcon = () => (
  <Icon>
    <rect x="1" y="1" width="22" height="20" fill="#f6fbff" stroke="#3a78b8" strokeWidth="2" />
    <path d="M1 3H23" stroke="#4a90d0" strokeWidth="4" />
    <path d="M6 8V18M4 16H12" stroke="#6c94b8" strokeWidth="2" />
    <Plus x={21} y={19} />
  </Icon>
);
const ProfilesIcon = () => (
  <Icon>
    <rect x="7" y="12" width="24" height="19" fill="#f6fbff" stroke="#3a78b8" strokeWidth="2" />
    <rect x="1" y="1" width="25" height="20" fill="#f6fbff" stroke="#3a78b8" strokeWidth="2" />
    <path d="M1 3H26" stroke="#4a90d0" strokeWidth="4" />
    <path d="M6 8V17H20M17 14L20 17M10 26H26M12 23L9 26L12 29M24 23L27 26L24 29" stroke="#6c94b8" strokeWidth="2" />
  </Icon>
);
const MarketWatchIcon = () => (
  <Icon>
    <rect x="1" y="1" width="29" height="30" fill="#fff" stroke="#4a98dc" strokeWidth="2" />
    <path d="M1 3H30" stroke="#5aa8ec" strokeWidth="4" />
    <path d="M5 10H9M5 15H7M18 10H27M20 14H27M5 20H10M5 26H12M24 26H27" stroke="#d0d0d0" strokeWidth="1" />
    <path d="M11 6L17 12H14V17H8V12H5Z" fill="#4cc820" stroke="#2a8a10" />
    <path d="M18 28L12 22H15V17H21V22H24Z" fill="#ff6a30" stroke="#c03a10" />
  </Icon>
);
const DataWindowIcon = () => (
  <Icon>
    <circle cx="16" cy="17" r="10" stroke="#6a6a6a" strokeWidth="2" />
    <path d="M16 2V14M16 20V32M1 17H13M19 17H31M16 16V18" stroke="#6a6a6a" strokeWidth="2" />
  </Icon>
);
const NavigatorIcon = () => (
  <Icon>
    <path d="M1 20V4Q1 2 3 2H9Q11 2 11 5H22V18H10Z" fill="#ffe070" stroke="#c89a20" strokeWidth="2" />
    <path d="M7 21V31H12" stroke="#555" strokeWidth="2" strokeDasharray="2 2" />
    <path d="M22 10L25 18L32 19L27 24L29 31L22 27L14 31L17 24L11 19L19 18Z" fill="#ffd84a" stroke="#b8861a" strokeWidth="2" />
  </Icon>
);
const TerminalIcon = () => (
  <Icon>
    <rect x="1" y="3" width="30" height="26" fill="#fff" stroke="#3a78b8" strokeWidth="2" />
    <path d="M4 3V29" stroke="#3a78b8" strokeWidth="6" />
    <path d="M14 8H29M14 13H29M14 18H29" stroke="#a8c0ff" strokeWidth="1" />
    <path d="M10 8H12M10 18H12" stroke="#f22" strokeWidth="2" />
    <path d="M10 13H12" stroke="#222" strokeWidth="2" />
  </Icon>
);
const TesterIcon = () => (
  <Icon>
    <rect x="1" y="1" width="23" height="27" fill="#f6f6f0" stroke="#a8a090" strokeWidth="2" />
    <path d="M6 5V12M10 4V10M16 4V10M20 5V12" stroke="#777" strokeWidth="2" />
    <path d="M24 24L32 32" stroke="#c8901a" strokeWidth="4" />
    <circle cx="16" cy="17" r="9" fill="#c8e4fa" stroke="#6a98c8" strokeWidth="2" />
  </Icon>
);
const OrderIcon = () => (
  <Icon>
    <path d="M2 1H16L22 7V26H2Z" fill="#fff" stroke="#777" strokeWidth="2" />
    <path d="M16 1V7H22M5 8H12M5 13H18M5 18H12" stroke="#777" strokeWidth="2" />
    <Plus x={21} y={21} />
  </Icon>
);
const EditorIcon = () => (
  <Icon>
    <path d="M13 4L31 18L18 31L1 19Z" fill="#e8a820" stroke="#8a5410" strokeWidth="2" />
    <path d="M13 4L29 17L18 26L3 17Z" fill="#ffd860" />
    <path d="M2 20L18 30L31 19" stroke="#a86818" strokeWidth="3" />
  </Icon>
);
const VpsIcon = () => (
  <Icon>
    <path d="M6 2L20 1L25 4V22H6Z" fill="#3ab0ff" stroke="#1a70d0" strokeWidth="2" />
    <path d="M11 8H21V12H11ZM11 15H21" stroke="#e8f6ff" strokeWidth="2" />
    <path d="M6 31Q0 31 1 26Q2 22 7 23Q9 17 16 18Q22 18 23 23Q31 21 31 27Q31 31 26 31Z" fill="#dfe6f6" stroke="#8090b0" strokeWidth="2" />
  </Icon>
);
const SignalsIcon = () => (
  <Icon>
    <circle cx="16" cy="16" r="14" stroke="#b4c8d8" strokeWidth="2" />
    <circle cx="16" cy="16" r="10" stroke="#9cc0b0" strokeWidth="2" />
    <circle cx="16" cy="16" r="6" stroke="#6a98c0" strokeWidth="2" />
    <path d="M17 17L31 16A15 15 0 0 1 17 32Z" fill="#4cb85a" opacity=".6" />
    <path d="M17 16V32" stroke="#1a9030" strokeWidth="2" />
    <circle cx="16" cy="15" r="3" fill="#2a60c8" />
  </Icon>
);
const ExpertIcon = () => (
  <Icon>
    <path d="M2 14H30L22 30Q16 33 12 29Z" fill="#ffd450" stroke="#c8961a" strokeWidth="2" />
    <path d="M1 12Q2 8 8 8Q9 1 17 1Q24 1 25 7Q31 7 31 12Q16 18 1 12Z" fill="#58b0dc" stroke="#2a78a8" strokeWidth="2" />
    <circle cx="24" cy="23" r="8" fill="#d82018" />
    <rect x="21" y="20" width="6" height="6" rx="1" fill="#fff" />
  </Icon>
);
const BarsIcon = () => (
  <Icon>
    <Axes />
    <path d="M20 6V24M20 9H25M15 22H20" stroke="#128a20" strokeWidth="2" />
  </Icon>
);
const CandleIcon = () => (
  <Icon>
    <Axes />
    <path d="M20 0V24" stroke="#128a20" strokeWidth="2" />
    <rect x="15" y="5" width="9" height="14" fill="#30d848" stroke="#128a20" strokeWidth="2" />
  </Icon>
);
const LineIcon = () => (
  <Icon>
    <Axes />
    <path d="M5 22Q12 8 17 11T29 19" stroke="#2a9a30" strokeWidth="2" />
  </Icon>
);
const ZoomIcon = ({ plus }) => (
  <Icon>
    <path d="M21 20L31 30" stroke={plus ? '#c8961a' : '#a8a8a8'} strokeWidth="5" />
    <path d="M21 20L30 29" stroke={plus ? '#ffe070' : '#e0e0e0'} strokeWidth="2" />
    <circle cx="12" cy="12" r="11" fill={plus ? '#d4f0fc' : '#ececec'} stroke={plus ? '#3a80c8' : '#b0b0b0'} strokeWidth="2" />
    <path d={plus ? 'M12 5V19M5 12H19' : 'M6 12H18'} stroke={plus ? '#4a90b8' : '#a8a8a8'} strokeWidth="4" />
  </Icon>
);
const TileIcon = () => (
  <Icon>
    <path d="M0 0H16V16H0ZM16 16H32V32H16Z" fill="#48981c" />
    <path d="M16 0H32V16H16ZM0 16H16V32H0Z" fill="#2a60d0" />
    <path d="M2 6H14V14H2ZM18 6H30V14H18ZM2 22H14V30H2ZM18 22H30V30H18Z" fill="#fff" />
    <path d="M4 10H12M20 9H28M4 26H12M20 26H28" stroke="#a8c8e8" strokeWidth="2" />
  </Icon>
);
const AutoScrollIcon = () => (
  <Icon>
    <Axes />
    <path d="M17 9L25 16L17 23Z" fill="#28c838" stroke="#128a20" strokeWidth="2" />
  </Icon>
);
const ShiftIcon = () => (
  <Icon>
    <Axes />
    <path d="M18 4V24" stroke="#1a6a98" strokeWidth="2" />
    <path d="M20 15L25 10V14H30V16H25V20Z" fill="#d83a08" stroke="#8a2a08" />
  </Icon>
);
const IndicatorsIcon = () => (
  <Icon>
    <path d="M2 1H16L22 7V26H2Z" fill="#fff" stroke="#777" strokeWidth="2" />
    <path d="M16 1V7H22M14 7Q9 5 9 12V20M6 13H14" stroke="#555" strokeWidth="2" />
    <Plus x={21} y={21} />
  </Icon>
);
const ClockIcon = () => (
  <Icon>
    <circle cx="16" cy="16" r="15" fill="#1a78e0" stroke="#104e9c" strokeWidth="2" />
    <circle cx="16" cy="16" r="10" fill="#f4f6f8" stroke="#7ab8f8" strokeWidth="2" />
    <path d="M15 9V17H22" stroke="#333" strokeWidth="2" />
  </Icon>
);
const TemplateIcon = () => (
  <Icon>
    <rect x="1" y="3" width="30" height="27" fill="#fff" stroke="#3a78b8" strokeWidth="2" />
    <path d="M1 5H31" stroke="#5a98d8" strokeWidth="4" />
    <path d="M1 18H31" stroke="#5a98d8" strokeWidth="2" />
    <path d="M5 14L10 14L14 11L19 12L23 10L28 10" stroke="#8a1a08" strokeWidth="2" />
    <path d="M6 26L12 26L15 22L18 25L23 22L27 26" stroke="#188a20" strokeWidth="2" />
  </Icon>
);
const CursorIcon = () => (
  <Icon>
    <path d="M11 2V26L16 21L20 30L24 28L20 19H27Z" fill="#505050" />
  </Icon>
);
const CrosshairIcon = () => (
  <Icon>
    <path d="M16 1V13M16 19V31M0 17H13M19 17H32M16 16V18" stroke="#505050" strokeWidth="2" />
  </Icon>
);
const StrokeIcon = ({ d }) => (
  <Icon>
    <path d={d} stroke="#505050" strokeWidth="2" />
  </Icon>
);
const ChannelIcon = () => (
  <Icon>
    <path d="M1 20L22 2M6 28L30 8M4 10V24M9 8V26M14 6V26M19 4V22M24 0V18" stroke="#505050" strokeWidth="2" strokeDasharray="4 1" />
    <path d="M31 23H25V31H31M25 27H30" stroke="#333" strokeWidth="2" />
  </Icon>
);
const FiboIcon = () => (
  <Icon>
    <path d="M9 3H25M9 10H25M9 18H25M9 26H25" stroke="#505050" strokeWidth="2" strokeDasharray="2 2" />
  </Icon>
);
const SearchIcon = () => (
  <Icon>
    <path d="M13 17L5 27" stroke="#2a60c8" strokeWidth="5" />
    <circle cx="18" cy="10" r="8" fill="#eef4ff" stroke="#3a78e0" strokeWidth="3" />
  </Icon>
);

const PRESSED =
  'border-2 border-t-[#808080] border-l-[#808080] border-r-white border-b-white bg-[#f1f1f1] bg-[repeating-conic-gradient(#ffffff_0_25%,#e6e6e6_0_50%)] bg-size-[4px_4px]';

function Tool({ label, pressed, narrow, children }) {
  return (
    <div className={clsx('flex shrink-0 justify-center', narrow ? 'w-11' : 'w-[50px]')}>
      <button aria-label={label} aria-pressed={pressed} className={clsx('flex h-[46px] w-[46px] shrink-0 items-center justify-center text-lg text-[#505050]', pressed && PRESSED)}>
        {children}
      </button>
    </div>
  );
}

function DropTool({ label, wide, children }) {
  return (
    <button aria-label={label} className={clsx('flex shrink-0 items-center gap-2', wide ? 'w-[72px] pl-2' : 'w-[70px] pl-1.5')}>
      {children}
      <svg className="h-1.5 w-3" viewBox="0 0 12 6" aria-hidden="true">
        <path d="M0 0H12L6 6Z" />
      </svg>
    </button>
  );
}

const Sep = ({ className = 'mx-1.5' }) => <i className={clsx('h-[42px] w-0.5 shrink-0 bg-[#909090]', className)} />;
const Grip = () => <i className="mx-1 h-10 w-1.5 shrink-0 bg-[repeating-linear-gradient(#888_0_2px,#e4e4e4_2px_4px)]" />;
const GroupEnd = () => <i className="w-1 shrink-0 self-stretch border-r-2 border-l-2 border-r-white border-l-[#888]" />;

function Toolbar() {
  return (
    <div className="box-content flex h-[50px] items-center overflow-hidden border-b-2 border-[#888]">
      <Grip />
      <DropTool label="New chart" wide><NewChartIcon /></DropTool>
      <DropTool label="Profiles" wide><ProfilesIcon /></DropTool>
      <Sep />
      <Tool label="Market Watch"><MarketWatchIcon /></Tool>
      <Tool label="Data Window"><DataWindowIcon /></Tool>
      <Tool label="Navigator"><NavigatorIcon /></Tool>
      <Tool label="Terminal"><TerminalIcon /></Tool>
      <Tool label="Strategy Tester"><TesterIcon /></Tool>
      <Sep className="mr-3.5 ml-1.5" />
      <button className="flex shrink-0 items-center gap-1 pr-4 text-[21px] leading-7 whitespace-nowrap">
        <OrderIcon />
        New Order
      </button>
      <Tool label="MetaEditor"><EditorIcon /></Tool>
      <Tool label="Virtual Hosting"><VpsIcon /></Tool>
      <Tool label="Signals"><SignalsIcon /></Tool>
      <button className="flex shrink-0 items-center gap-2 pr-6 pl-2 text-[21px] leading-7">
        <ExpertIcon />
        AutoTrading
      </button>
      <GroupEnd />
      <Grip />
      <Tool label="Bar Chart"><BarsIcon /></Tool>
      <Tool label="Candlesticks" pressed><CandleIcon /></Tool>
      <Tool label="Line Chart"><LineIcon /></Tool>
      <Sep />
      <Tool label="Zoom In"><ZoomIcon plus /></Tool>
      <Tool label="Zoom Out"><ZoomIcon /></Tool>
      <Tool label="Tile Windows"><TileIcon /></Tool>
      <Sep />
      <Tool label="Auto Scroll"><AutoScrollIcon /></Tool>
      <Tool label="Chart Shift" pressed><ShiftIcon /></Tool>
      <Sep className="mr-2 ml-1" />
      <DropTool label="Indicators"><IndicatorsIcon /></DropTool>
      <DropTool label="Periods"><ClockIcon /></DropTool>
      <DropTool label="Templates"><TemplateIcon /></DropTool>
      <GroupEnd />
      <Grip />
      {['M1', 'M5', 'M15', 'M30', 'H1', 'H4', 'D1', 'W1', 'MN'].map((period) => (
        <Tool key={period} label={period} pressed={period === 'M5'}>{period}</Tool>
      ))}
      <GroupEnd />
      <Grip />
      <Tool label="Cursor" pressed><CursorIcon /></Tool>
      <Tool label="Crosshair"><CrosshairIcon /></Tool>
      <Sep />
      <Tool label="Vertical Line"><StrokeIcon d="M16 3V29" /></Tool>
      <Tool label="Horizontal Line"><StrokeIcon d="M4 17H28" /></Tool>
      <Tool label="Trendline"><StrokeIcon d="M4 29L28 5" /></Tool>
      <Tool label="Equidistant Channel"><ChannelIcon /></Tool>
      <Tool label="Fibonacci Retracement" narrow><FiboIcon /></Tool>
      <Tool label="Search" narrow><SearchIcon /></Tool>
      <button aria-label="Notifications" className="ml-auto flex shrink-0 pr-3">
        <svg className="h-11 w-12" viewBox="0 0 48 44" aria-hidden="true">
          <path d="M16 15A12 12 0 0 0 9 37L11 42L16 38A13 12 0 0 0 16 15Z" fill="#eee" stroke="#a8a8a8" strokeWidth="2" />
          <circle cx="30" cy="18" r="16" fill="#e0362a" />
          <text x="30" y="25" textAnchor="middle" fontSize="20" fill="#fff">1</text>
        </svg>
      </button>
    </div>
  );
}

function MenuBar() {
  return (
    <header className="flex h-10 items-center border-b-2 border-[#888]">
      <svg className="mr-3 h-8 w-[30px]" viewBox="0 0 30 32" fill="none" aria-hidden="true">
        <path d="M3 3H25V20H3Z" fill="#fff" stroke="#5a90e8" strokeWidth="3" strokeDasharray="4 1" />
        <path d="M9 14H28V30H9Z" fill="#fff" stroke="#5a90e8" strokeWidth="3" />
        <path d="M8 14V8L12 12M13 20L17 26L20 19L24 26" stroke="#6ab8d8" strokeWidth="2" />
      </svg>
      <nav className="flex gap-[34px] pt-1.5 text-[21px] leading-7">
        {['File', 'View', 'Insert', 'Charts', 'Tools', 'Window', 'Help'].map((item) => (
          <button key={item} className="first-letter:underline first-letter:decoration-2 first-letter:underline-offset-4">
            {item}
          </button>
        ))}
      </nav>
      <div className="ml-auto flex gap-1 self-start pt-1 pr-0.5">
        {[
          ['Minimize', 'M3 20H12', '#808080'],
          ['Restore', 'M7 5H17V13H15M3 11H13V19H3Z', '#808080'],
          ['Close', 'M5 4L16 18M16 4L5 18', '#000'],
        ].map(([label, d, color]) => (
          <button key={label} aria-label={label} className="flex h-[26px] w-[26px] items-center justify-center border-2 border-t-white border-r-[#555] border-b-[#555] border-l-white">
            <svg className="h-[22px] w-[22px]" viewBox="0 0 22 22" fill="none" stroke={color} strokeWidth="3">
              <path d={d} />
            </svg>
          </button>
        ))}
      </div>
    </header>
  );
}

function ChartTabs() {
  return (
    <div className="flex h-11 items-start border-t-2 border-b-2 border-t-white border-b-white">
      <div className="flex h-full flex-1 items-start border-t-2 border-black pl-3 text-[21px] leading-7">
        <button className="-mt-0.5 h-[38px] w-40 border-2 border-t-white border-r-black border-b-black border-l-black bg-white pr-1.5 shadow-[2px_2px_0_#a0a0a0]">
          AUDNZD,M5
        </button>
        {['NZDUSD,M1', 'CADCHF,M5'].map((tab) => (
          <button key={tab} className="mt-1 h-7 w-40 border-r-2 border-[#444] text-[#444]">
            {tab}
          </button>
        ))}
        <div className="ml-auto flex gap-8 pt-2.5 pr-5">
          <button aria-label="Scroll left">
            <svg className="h-3 w-1.5" viewBox="0 0 6 12" fill="#999"><path d="M6 0V12L0 6Z" /></svg>
          </button>
          <button aria-label="Scroll right">
            <svg className="h-3 w-1.5" viewBox="0 0 6 12" fill="#999"><path d="M0 0V12L6 6Z" /></svg>
          </button>
        </div>
      </div>
    </div>
  );
}

const Field = ({ className, children }) => (
  <div className={clsx('flex h-9 shrink-0 items-center border-l-2 border-[#888] pt-1 pl-2 shadow-[inset_2px_0_0_#fff]', className)}>{children}</div>
);

function StatusBar() {
  const columns = [0, 1, 2, 3, 4, 5, 6, 7];
  return (
    <footer className="flex h-11 items-center text-[21px] leading-7 whitespace-nowrap">
      <p className="flex-1 pt-1 pl-0.5">For Help, press F1</p>
      <Field className="w-[219px]">M1 ULTIMATE</Field>
      <Field className="w-[201px]">2023.03.28 16:10</Field>
      <Field className="w-36">O: 1.07112</Field>
      <Field className="w-[141px]">H: 1.07128</Field>
      <Field className="w-[138px]">L: 1.07106</Field>
      <Field className="w-[142px]">C: 1.07123</Field>
      <Field className="w-[133px]">V: 341</Field>
      <Field className="w-[276px]">
        <svg className="mr-1.5 h-[26px] w-12 -translate-y-1" viewBox="0 0 48 26" aria-hidden="true">
          {columns.map((i) => (
            <g key={i}>
              <rect x={i * 6} y="0" width="4" height={18 - i * 2} fill="#5a7a10" />
              <rect x={i * 6} y={20 - i * 2} width="4" height={6 + i * 2} fill="#0a4260" />
            </g>
          ))}
        </svg>
        204912/306 kb
        <svg className="ml-auto h-8 w-8 self-end" viewBox="0 0 32 32" stroke="#888" strokeWidth="3" aria-hidden="true">
          <path d="M2 32L32 2M11 32L32 11M20 32L32 20M28 32L32 28" />
        </svg>
      </Field>
    </footer>
  );
}

export default function App() {
  return (
    <div className="flex h-screen flex-col overflow-hidden bg-[#e4e4e4] text-black font-['DejaVu_Sans_Condensed','DejaVu_Sans',sans-serif]">
      <MenuBar />
      <div className="h-0.5 bg-white" />
      <Toolbar />
      <Chart />
      <div className="h-0.5" />
      <ChartTabs />
      <StatusBar />
    </div>
  );
}
